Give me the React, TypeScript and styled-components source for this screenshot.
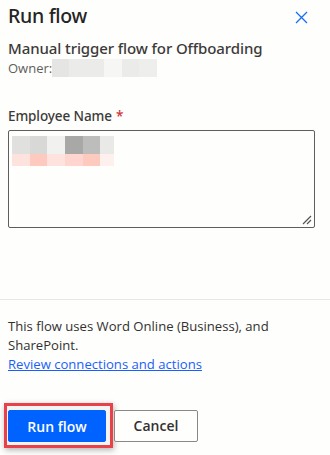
import React from "react";
import styled, { createGlobalStyle } from "styled-components";

const Global = createGlobalStyle`
  html, body { margin: 0; padding: 0; background: #fefefc; }
  body { font-family: "Open Sans", "Noto Sans", Arial, sans-serif; color: #323130; }
  * { box-sizing: border-box; }
`;

const Panel = styled.div`
  width: 330px;
  height: 455px;
  display: flex;
  flex-direction: column;
  background: #fefefc;
`;

const Header = styled.div`
  display: flex;
  justify-content: space-between;
  align-items: flex-start;
  padding: 2px 22px 0 8px;
`;

const Title = styled.h1`
  margin: 0;
  font-family: "Noto Sans", "Open Sans", sans-serif;
  font-size: 19.5px;
  line-height: 28px;
  font-weight: 500;
  color: #252423;
  letter-spacing: -0.3px;
`;

const CloseButton = styled.button`
  border: 0;
  background: transparent;
  padding: 0;
  margin-top: 8px;
  width: 14px;
  height: 14px;
  display: flex;
  align-items: center;
  justify-content: center;
  color: #1470f0;
  cursor: pointer;
`;

const Sub = styled.div`
  padding: 0 8px;
  margin-top: 9px;
  font-family: "Noto Sans", "Open Sans", sans-serif;
  font-size: 15px;
  line-height: 19px;
  font-weight: 500;
  color: #3b3a39;
  letter-spacing: -0.1px;
`;

const OwnerRow = styled.div`
  display: flex;
  align-items: center;
  padding: 0 8px;
  margin-top: 1px;
  font-size: 13px;
  color: #605e5c;
  height: 18px;
`;

const Blur = styled.div`
  display: flex;
`;

const Cell = styled.div<{ $c: string; $w: number; $h: number }>`
  width: ${(p) => p.$w}px;
  height: ${(p) => p.$h}px;
  background: ${(p) => p.$c};
`;

const BlurGrid = styled.div`
  display: flex;
  flex-direction: column;
`;

const Field = styled.div`
  padding: 0 8px;
  margin-top: 30px;
`;

const Label = styled.label`
  display: block;
  font-family: "Noto Sans", "Open Sans", sans-serif;
  font-size: 13.5px;
  line-height: 18px;
  font-weight: 500;
  color: #3b3a39;
  letter-spacing: -0.1px;
`;

const Required = styled.span`
  color: #d13438;
  margin-left: 4px;
`;

const TextBox = styled.div`
  position: relative;
  margin-top: 5px;
  width: 307px;
  height: 98px;
  border: 1px solid #605e5c;
  border-radius: 2px;
  padding: 5px 3px;
  background: #fefefc;
`;

const Grip = styled.svg`
  position: absolute;
  right: 2px;
  bottom: 2px;
`;

const Spacer = styled.div`
  flex: 1;
`;

const Divider = styled.hr`
  margin: 0;
  border: 0;
  border-top: 1px solid #e7e6e4;
`;

const Footer = styled.div`
  padding: 17px 8px 0;
  font-size: 13.1px;
  line-height: 19px;
  color: #323130;
`;

const Info = styled.p`
  margin: 0;
`;

const Link = styled.a`
  color: #1a5ffa;
  text-decoration: underline;
  cursor: pointer;
`;

const Actions = styled.div`
  display: flex;
  align-items: center;
  gap: 1px;
  padding: 29px 4px 7px;
`;

const PrimaryWrap = styled.div`
  display: flex;
  border: 3px solid #e8414a;
  padding: 4px 4px 3px 1px;
  background: #f4f4f2;
  box-shadow: 1px 2px 6px rgba(0, 0, 0, 0.3);
`;

const Button = styled.button<{ $primary?: boolean }>`
  height: 32px;
  min-width: ${(p) => (p.$primary ? "98px" : "84px")};
  padding: 0 16px;
  border-radius: 2px;
  font-family: inherit;
  font-size: 14px;
  font-weight: 600;
  cursor: pointer;
  border: 1px solid ${(p) => (p.$primary ? "#0063ff" : "#8a8886")};
  background: ${(p) => (p.$primary ? "#0063ff" : "#fefefc")};
  color: ${(p) => (p.$primary ? "#ffffff" : "#323130")};
`;

const ownerCells = ["#e5e5e3", "#ebebe9", "#ebebe9", "#f6f6f4", "#ebebe9", "#eeeeec"];
const topCells = [
  { c: "#e0e0df", w: 18 },
  { c: "#d8d8d7", w: 17 },
  { c: "#f1f1ef", w: 18 },
  { c: "#a8a8a7", w: 18 },
  { c: "#bdbdbc", w: 17 },
  { c: "#e9e9e8", w: 14 },
];
const bottomCells = ["#fde2de", "#fecabf", "#fde2de", "#fed5cf", "#fecabf", "#fef0ec"];

export default function App() {
  return (
    <>
      <Global />
      <Panel>
        <Header>
          <Title>Run flow</Title>
          <CloseButton aria-label="Close">
            <svg width="13" height="13" viewBox="0 0 13 13">
              <path d="M1 1 L12 12 M12 1 L1 12" stroke="currentColor" strokeWidth="1.3" fill="none" />
            </svg>
          </CloseButton>
        </Header>
        <Sub>Manual trigger flow for Offboarding</Sub>
        <OwnerRow>
          Owner:
          <Blur>
            {ownerCells.map((c, i) => (
              <Cell key={i} $c={c} $w={i === 0 ? 17 : 17.5} $h={18} />
            ))}
          </Blur>
        </OwnerRow>
        <Field>
          <Label>
            Employee Name<Required>*</Required>
          </Label>
          <TextBox>
            <BlurGrid>
              <Blur>
                {topCells.map((t, i) => (
                  <Cell key={i} $c={t.c} $w={t.w} $h={18} />
                ))}
              </Blur>
              <Blur>
                {bottomCells.map((c, i) => (
                  <Cell key={i} $c={c} $w={topCells[i].w} $h={12} />
                ))}
              </Blur>
            </BlurGrid>
            <Grip width="10" height="10" viewBox="0 0 10 10">
              <path d="M1 9 L9 1 M5 9 L9 5" stroke="#555" strokeWidth="1.2" fill="none" />
            </Grip>
          </TextBox>
        </Field>
        <Spacer />
        <Divider />
        <Footer>
          <Info>This flow uses Word Online (Business), and SharePoint.</Info>
          <Link>Review connections and actions</Link>
        </Footer>
        <Actions>
          <PrimaryWrap>
            <Button $primary>Run flow</Button>
          </PrimaryWrap>
          <Button>Cancel</Button>
        </Actions>
      </Panel>
    </>
  );
}
